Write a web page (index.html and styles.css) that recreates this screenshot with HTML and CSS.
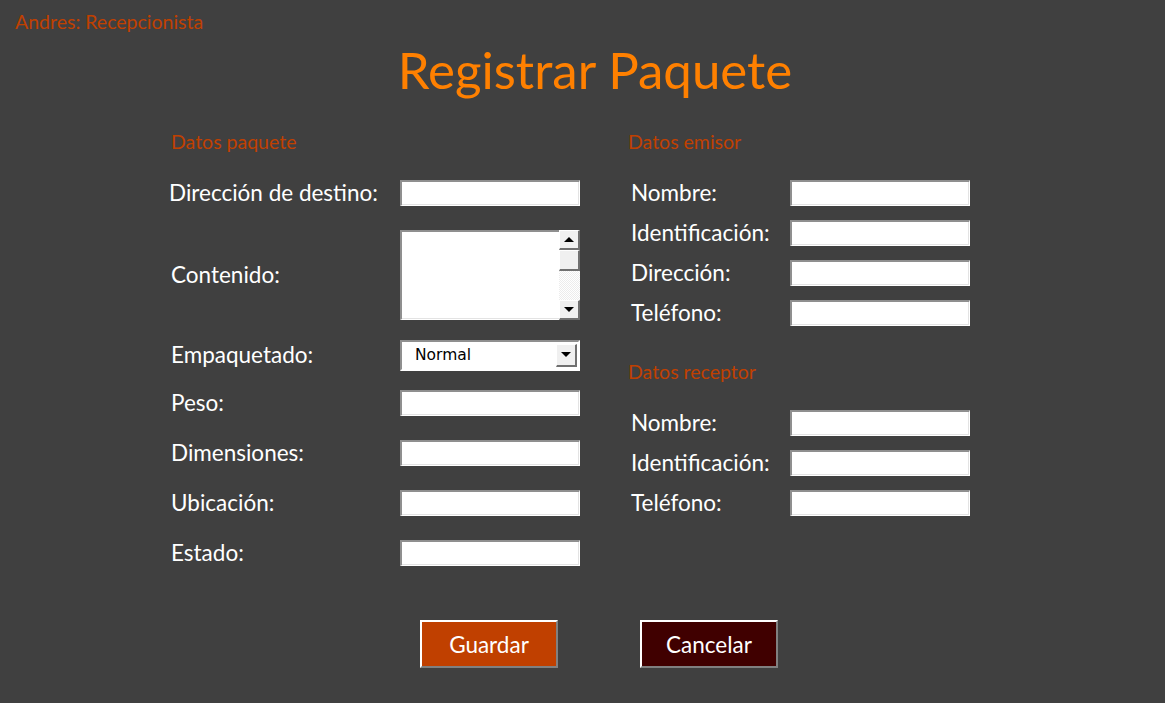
FILE: index.html
```html
<!DOCTYPE html>
<html lang="es">
<head>
<meta charset="utf-8">
<title>Registrar Paquete</title>
<link rel="stylesheet" href="styles.css">
</head>
<body>
<div class="user">Andres: Recepcionista</div>
<h1 class="title">Registrar Paquete</h1>
<div class="form">
  <div class="col col-left">
    <div class="section">Datos paquete</div>
    <div class="rows rows-left">
      <div class="row"><span class="label label-wide">Dirección de destino:</span><span class="field"></span></div>
      <div class="row row-area"><span class="label">Contenido:</span>
        <span class="area">
          <span class="area-text"></span>
          <span class="scroll">
            <span class="sbtn"><span class="tri-up"></span></span>
            <span class="thumb"></span>
            <span class="track"></span>
            <span class="sbtn"><span class="tri-down"></span></span>
          </span>
        </span>
      </div>
      <div class="row row-select"><span class="label">Empaquetado:</span>
        <span class="select"><span class="select-text">Normal</span><span class="sbtn drop"><span class="tri-down"></span></span></span>
      </div>
      <div class="row"><span class="label">Peso:</span><span class="field"></span></div>
      <div class="row"><span class="label">Dimensiones:</span><span class="field"></span></div>
      <div class="row"><span class="label">Ubicación:</span><span class="field"></span></div>
      <div class="row"><span class="label">Estado:</span><span class="field"></span></div>
    </div>
  </div>
  <div class="col col-right">
    <div class="section">Datos emisor</div>
    <div class="rows rows-right">
      <div class="row"><span class="label">Nombre:</span><span class="field"></span></div>
      <div class="row"><span class="label">Identificación:</span><span class="field"></span></div>
      <div class="row"><span class="label">Dirección:</span><span class="field"></span></div>
      <div class="row"><span class="label">Teléfono:</span><span class="field"></span></div>
    </div>
    <div class="section section-2">Datos receptor</div>
    <div class="rows rows-right">
      <div class="row"><span class="label">Nombre:</span><span class="field"></span></div>
      <div class="row"><span class="label">Identificación:</span><span class="field"></span></div>
      <div class="row"><span class="label">Teléfono:</span><span class="field"></span></div>
    </div>
  </div>
</div>
<div class="buttons">
  <button class="btn btn-save">Guardar</button>
  <button class="btn btn-cancel">Cancelar</button>
</div>
</body>
</html>
```

FILE: styles.css
```css
html, body {
  margin: 0;
  padding: 0;
}
body {
  background: #404040;
  width: 1165px;
  height: 703px;
  overflow: hidden;
  font-family: Lato, "Open Sans", sans-serif;
  color: #ffffff;
}
.user {
  padding: 11px 0 0 15px;
  font-size: 19.5px;
  line-height: 22px;
  color: #c04000;
}
.title {
  margin: 12px 0 0 0;
  padding-left: 25px;
  text-align: center;
  font-size: 51px;
  line-height: 50px;
  font-weight: normal;
  color: #ff8000;
}
.form {
  display: flex;
  padding-left: 169px;
  margin-top: 37px;
}
.col-left {
  width: 459px;
}
.col-right {
  width: 342px;
}
.section {
  font-size: 19.5px;
  line-height: 20px;
  color: #c04000;
  padding-left: 2px;
}
.col-right .section-2 {
  margin-top: 36px;
  padding-left: 2px;
}
.col-right .section {
  padding-left: 0;
}
.rows {
  display: flex;
  flex-direction: column;
  margin-top: 28px;
}
.rows-left {
  gap: 20px;
}
.rows-right {
  gap: 14px;
}
.row {
  display: flex;
  align-items: flex-start;
}
.rows-left .row {
  height: 30px;
}
.rows-left .row.row-area {
  height: 90px;
  align-items: center;
}
.rows-left .row.row-select {
  align-items: center;
}
.label {
  font-size: 22.5px;
  line-height: 26px;
  white-space: nowrap;
}
.rows-left .label {
  width: 231px;
  padding-left: 2px;
  box-sizing: border-box;
}
.rows-left .label-wide {
  padding-left: 0;
}
.rows-right .label {
  width: 162px;
  padding-left: 3px;
  box-sizing: border-box;
}
.field {
  display: block;
  width: 180px;
  height: 26px;
  box-sizing: border-box;
  background: #ffffff;
  border-top: 2px solid #8f8f8f;
  border-left: 2px solid #8f8f8f;
  border-right: 1px solid #ffffff;
  border-bottom: 1px solid #ffffff;
  box-shadow: inset -1px -1px 0 #e3e3e3;
}
.area {
  display: flex;
  width: 180px;
  height: 90px;
  box-sizing: border-box;
  background: #ffffff;
  border-top: 2px solid #8f8f8f;
  border-left: 2px solid #8f8f8f;
  border-bottom: 1px solid #ffffff;
}
.area-text {
  flex: 1;
  box-shadow: inset 0 -1px 0 #e3e3e3;
}
.scroll {
  display: flex;
  flex-direction: column;
  width: 21px;
  margin-top: -2px;
  margin-bottom: -1px;
}
.sbtn {
  display: flex;
  align-items: center;
  justify-content: center;
  height: 20px;
  box-sizing: border-box;
  background: #f0f0f0;
  border-top: 1px solid #ffffff;
  border-left: 1px solid #ffffff;
  border-right: 2px solid #707070;
  border-bottom: 2px solid #707070;
}
.thumb {
  height: 21px;
  box-sizing: border-box;
  background: #f0f0f0;
  border-top: 1px solid #ffffff;
  border-left: 1px solid #ffffff;
  border-right: 2px solid #707070;
  border-bottom: 2px solid #707070;
}
.track {
  flex: 1;
  background-color: #f4f4f4;
  background-image: repeating-conic-gradient(#ffffff 0 25%, #ececec 0 50%);
  background-size: 2px 2px;
}
.tri-up {
  width: 0;
  height: 0;
  border-left: 5px solid transparent;
  border-right: 5px solid transparent;
  border-bottom: 5px solid #000000;
}
.tri-down {
  width: 0;
  height: 0;
  border-left: 5px solid transparent;
  border-right: 5px solid transparent;
  border-top: 5px solid #000000;
}
.select {
  display: flex;
  align-items: center;
  width: 180px;
  height: 31px;
  box-sizing: border-box;
  background: #ffffff;
  border-top: 2px solid #8f8f8f;
  border-left: 2px solid #8f8f8f;
  border-right: 2px solid #ffffff;
  border-bottom: 2px solid #ffffff;
  padding-right: 1px;
}
.select-text {
  flex: 1;
  padding-left: 13px;
  font-family: "DejaVu Sans", "Liberation Sans", sans-serif;
  font-size: 15.5px;
  color: #000000;
}
.sbtn.drop {
  width: 21px;
  height: 23px;
}
.buttons {
  display: flex;
  gap: 82px;
  padding-left: 420px;
  margin-top: 50px;
}
.btn {
  width: 138px;
  height: 48px;
  box-sizing: border-box;
  font-family: Lato, "Open Sans", sans-serif;
  font-size: 22.5px;
  color: #ffffff;
  border-top: 2px solid #ffffff;
  border-left: 2px solid #ffffff;
  border-right: 2px solid #808080;
  border-bottom: 2px solid #808080;
  padding: 0;
}
.btn-save {
  background: #c04000;
}
.btn-cancel {
  background: #400000;
}
```
